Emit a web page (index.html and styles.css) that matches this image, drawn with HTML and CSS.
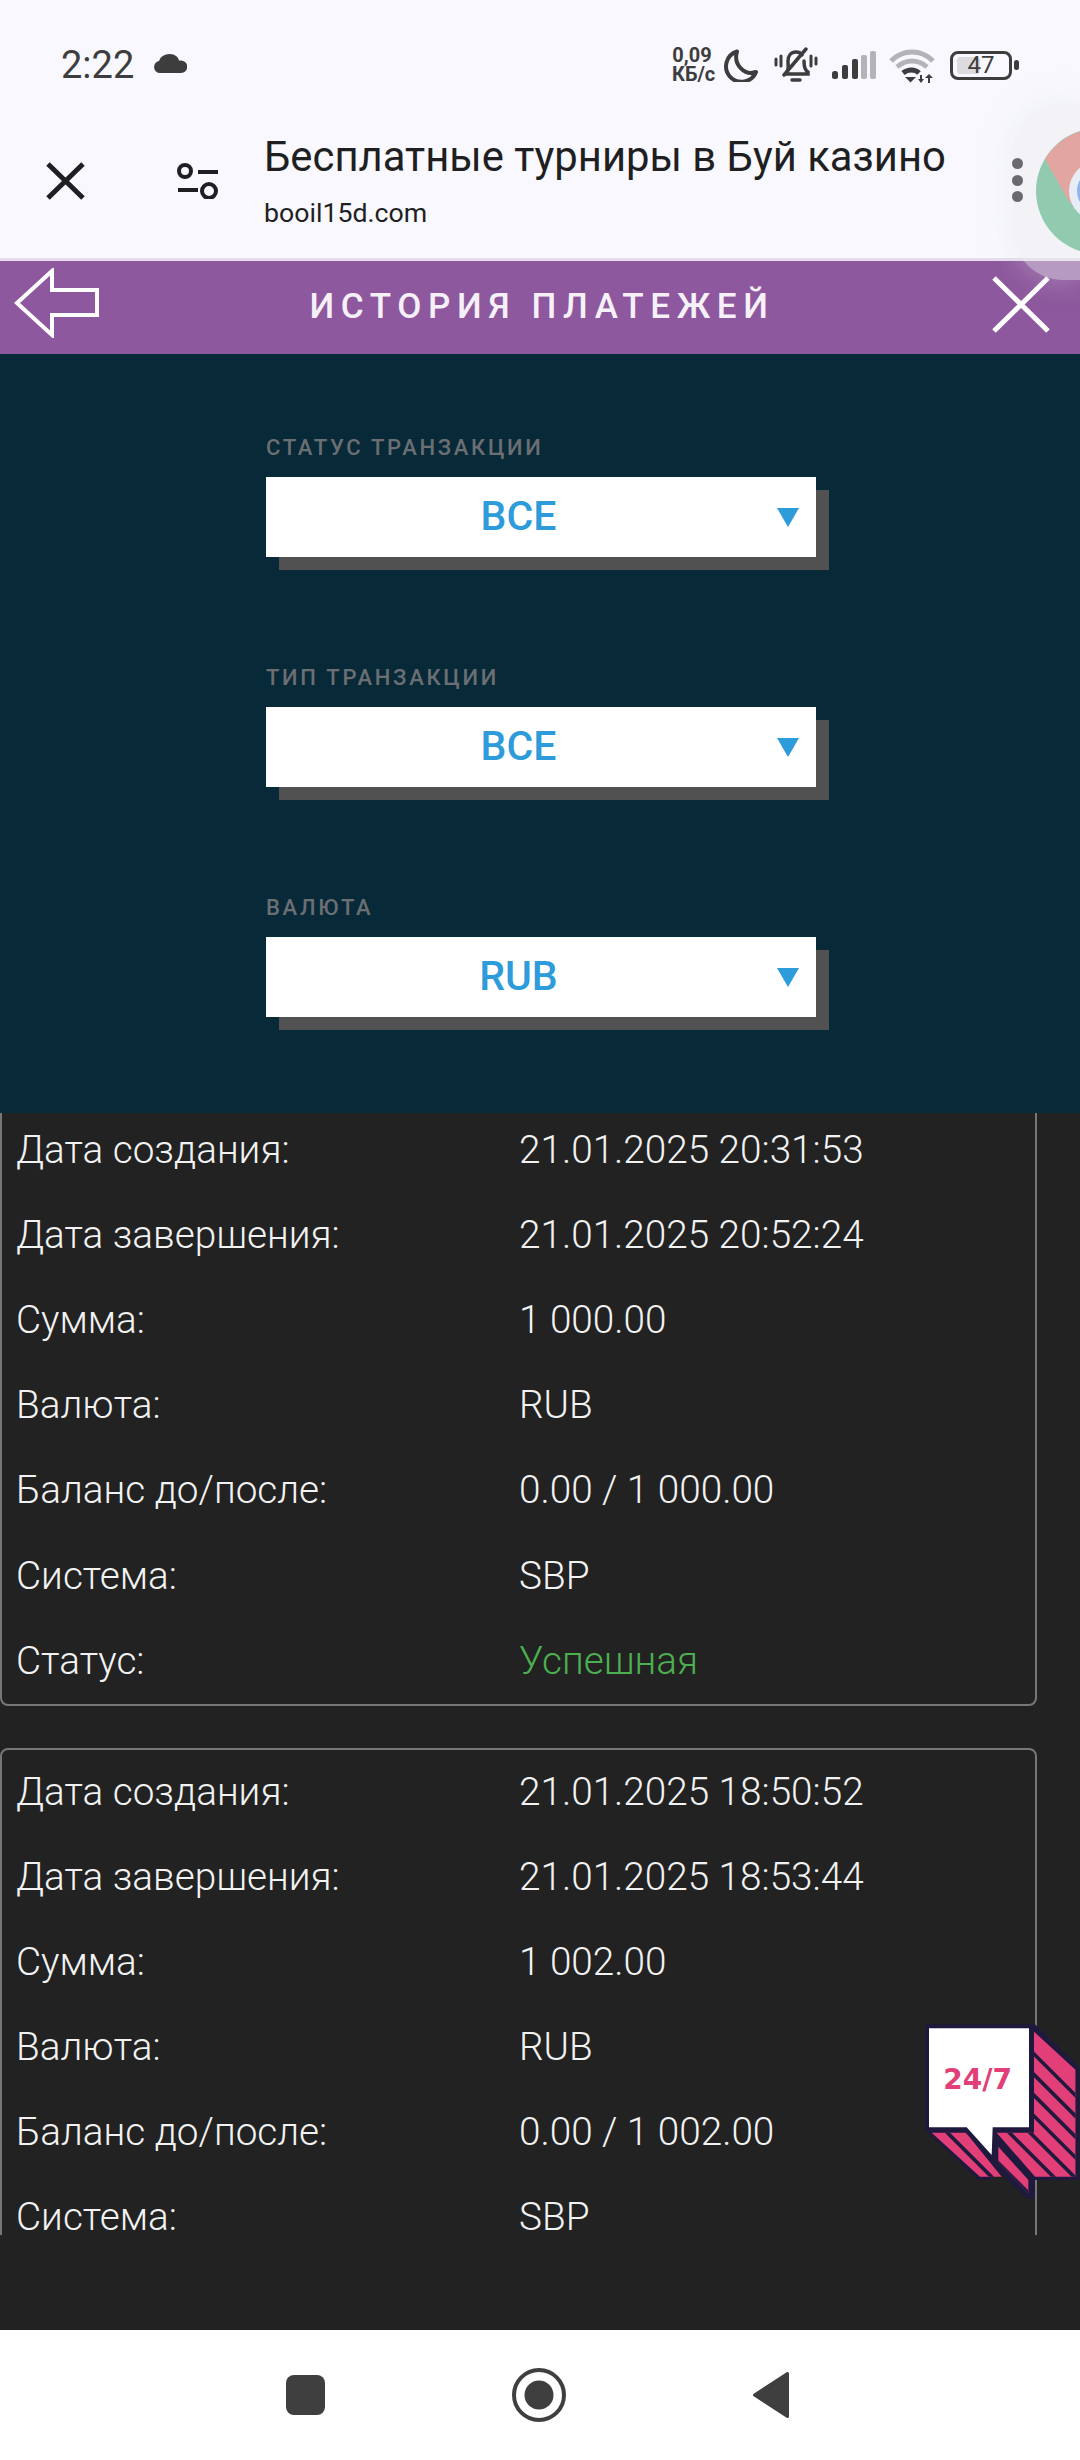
FILE: index.html
```html
<!DOCTYPE html>
<html lang="ru">
<head>
    <meta charset="UTF-8">
    <meta name="viewport" content="width=device-width, initial-scale=1.0">
    <title>История платежей</title>
    <link rel="stylesheet" href="styles.css">
</head>
<body>

    <!-- Phone status bar -->
    <div class="status-bar">
        <span class="clock">2:22</span>
        <svg class="cloud" width="33" height="19" viewBox="0 0 33 19"><path fill="#3d3d3d" d="M6 19a6 6 0 0 1-1-11.900A11 8 0 0 1 16 0a10 8 0 0 1 9 6.500h2a6.200 6.200 0 0 1 0 12.500z"/></svg>
        <div class="status-icons">
            <div class="net-speed"><span>0,09</span><span>КБ/с</span></div>
            <svg class="moon" width="35" height="33" viewBox="0 0 35 33"><path fill="none" stroke="#3d3d3d" stroke-width="4" stroke-linejoin="round" d="M14 2.500A15.500 15.500 0 1 0 33 23C22 27 10 16 14 2.500z"/></svg>
            <svg class="bell" width="44" height="36" viewBox="0 0 44 36">
                <g fill="none" stroke="#3d3d3d" stroke-linecap="round">
                    <path stroke-width="3" d="M2 12v6M37 9v10M42 11v6M7 9v10"/>
                    <path stroke-width="3.500" d="M13 25c2-3 1-7 1-11 0-5 3-9 8-9 3 0 5 1 6 3M30 14c0 4 0 9 4 11v2H12"/>
                    <path stroke-width="3.500" d="M32 2 10 28"/>
                    <path stroke-width="3.500" d="M18 33h8"/>
                </g>
            </svg>
            <svg class="signal" width="44" height="28" viewBox="0 0 44 28">
                <rect x="0" y="20" width="6" height="8" rx="2.500" fill="#3d3d3d"/>
                <rect x="10" y="14" width="6" height="14" rx="2" fill="#3d3d3d"/>
                <rect x="20" y="8" width="6" height="20" rx="2" fill="#3d3d3d"/>
                <rect x="29" y="4" width="6" height="24" rx="2" fill="#b4b4b8"/>
                <rect x="38" y="0" width="6" height="28" rx="2" fill="#b4b4b8"/>
            </svg>
            <svg class="wifi" width="46" height="35" viewBox="0 0 46 35">
                <g fill="none" stroke-width="5">
                    <path stroke="#b4b4b8" d="M2 13c12-12 30-12 42 0"/>
                    <path stroke="#b4b4b8" d="M8 19c9-8 21-8 30 0"/>
                    <path stroke="#3d3d3d" d="M14 25c5-4 12-4 16 0"/>
                </g>
                <path fill="#3d3d3d" d="M16 29h11l-5.500 5.500z"/>
                <path fill="#3d3d3d" d="M31 27h2v4h2l-3 4-3-4h2zM39 35h2v-5h3l-4-4-4 4h3z"/>
            </svg>
            <div class="battery">
                <div class="battery-body"><div class="battery-fill"></div><span>47</span></div>
                <div class="battery-nub"></div>
            </div>
        </div>
    </div>

    <!-- Custom tab toolbar -->
    <div class="toolbar">
        <svg class="tab-close" width="39" height="38" viewBox="0 0 39 38"><path fill="none" stroke="#1f1f22" stroke-width="5" d="M2 2l35 34M37 2 2 36"/></svg>
        <svg class="tab-tune" width="42" height="36" viewBox="0 0 42 36">
            <g fill="none" stroke="#1f1f22" stroke-width="4">
                <circle cx="8" cy="8" r="6"/>
                <circle cx="32" cy="28" r="7"/>
                <path d="M21 9h20M1 27h20"/>
            </g>
        </svg>
        <div class="tab-text">
            <div class="tab-title">Бесплатные турниры в Буй казино</div>
            <div class="tab-url">booil15d.com</div>
        </div>
    </div>

    <div class="page-header">
        <svg class="back-btn" width="85" height="70" viewBox="0 0 85 70"><path fill="none" stroke="#fff" stroke-width="4" d="M38 3 3 35l35 32V47h45V22H38z"/></svg>
        <div class="page-title">ИСТОРИЯ ПЛАТЕЖЕЙ</div>
        <svg class="close-btn" width="58" height="57" viewBox="0 0 58 57"><path fill="none" stroke="#fff" stroke-width="5" d="M2 2l54 53M56 2 2 55"/></svg>
    </div>

    <div class="filters">
        <div class="filter-group">
            <div class="filter-label">СТАТУС ТРАНЗАКЦИИ</div>
            <div class="filter-select"><span class="filter-value">ВСЕ</span><span class="filter-arrow"></span></div>
        </div>
        <div class="filter-group">
            <div class="filter-label">ТИП ТРАНЗАКЦИИ</div>
            <div class="filter-select"><span class="filter-value">ВСЕ</span><span class="filter-arrow"></span></div>
        </div>
        <div class="filter-group">
            <div class="filter-label">ВАЛЮТА</div>
            <div class="filter-select"><span class="filter-value">RUB</span><span class="filter-arrow"></span></div>
        </div>
    </div>

    <!-- Scrolled list of payments -->
    <div class="content">
        <div class="history">
            <div class="card">
                <div class="row"><span>Дата создания:</span><span>21.01.2025 20:31:53</span></div>
                <div class="row"><span>Дата завершения:</span><span>21.01.2025 20:52:24</span></div>
                <div class="row"><span>Сумма:</span><span>1 000.00</span></div>
                <div class="row"><span>Валюта:</span><span>RUB</span></div>
                <div class="row"><span>Баланс до/после:</span><span>0.00 / 1 000.00</span></div>
                <div class="row"><span>Система:</span><span>SBP</span></div>
                <div class="row"><span>Статус:</span><span class="success">Успешная</span></div>
            </div>
            <div class="card card-cut">
                <div class="row"><span>Дата создания:</span><span>21.01.2025 18:50:52</span></div>
                <div class="row"><span>Дата завершения:</span><span>21.01.2025 18:53:44</span></div>
                <div class="row"><span>Сумма:</span><span>1 002.00</span></div>
                <div class="row"><span>Валюта:</span><span>RUB</span></div>
                <div class="row"><span>Баланс до/после:</span><span>0.00 / 1 002.00</span></div>
                <div class="row"><span>Система:</span><span>SBP</span></div>
            </div>
        </div>
    </div>

    <div class="nav-bar">
        <div class="nav-square"></div>
        <svg width="54" height="54" viewBox="0 0 54 54"><circle cx="27" cy="27" r="25" fill="none" stroke="#3f3f3f" stroke-width="4"/><circle cx="27" cy="27" r="14.500" fill="#3f3f3f"/></svg>
        <svg width="36" height="46" viewBox="0 0 36 46"><path fill="#3f3f3f" stroke="#3f3f3f" stroke-width="3" stroke-linejoin="round" d="M34.500 1.500v43L1.500 23z"/></svg>
    </div>

    <!-- Floating chrome bubble -->
    <div class="bubble">
        <svg class="bubble-logo" width="67" height="177" viewBox="0 0 67 177">
            <circle cx="86" cy="88" r="63" fill="#92cab0"/>
            <path fill="#e3a5a0" d="M32 56A63 63 0 0 1 149 88H86L57 100z"/>
            <circle cx="86" cy="88" r="30" fill="#e8ecf6"/>
            <circle cx="86" cy="88" r="22" fill="#8fb4ee"/>
        </svg>
        <div class="bubble-dots"><span></span><span></span><span></span></div>
    </div>

    <!-- 24/7 support badge -->
    <svg class="support-badge" width="160" height="180" viewBox="120 120 480 540">
        <defs>
            <clipPath id="stripes">
                <path d="M462 155 587 270V590H465L350 458H462z"/>
                <path d="M155 458H258L365 590H300z"/>
                <path d="M355 500 445 600V640L355 545z"/>
            </clipPath>
        </defs>
        <path fill="#1f1a3d" d="M135 133H465L598 262V600H465V655H440L345 565 330 600H295L135 450z"/>
        <g clip-path="url(#stripes)">
            <rect x="120" y="120" width="480" height="540" fill="#e23f78"/>
            <path fill="none" stroke="#1f1a3d" stroke-width="11" d="M100 -140 700 460M100 -78 700 522M100 -16 700 584M100 46 700 646M100 108 700 708M100 170 700 770M100 232 700 832M100 294 700 894M100 356 700 956"/>
        </g>
        <path fill="#fff" d="M147 145H447V442H338L335 525 260 442H147z"/>
        <text class="badge-text" x="293" y="326" text-anchor="middle">24/7</text>
    </svg>

</body>
</html>
```

FILE: styles.css
```css
* {
    box-sizing: border-box;
}
html, body {
    margin: 0;
    padding: 0;
}
body {
    position: relative;
    width: 1080px;
    height: 2460px;
    overflow: hidden;
    display: flex;
    flex-direction: column;
    background-color: #222;
    font-family: Roboto, "Noto Sans", sans-serif;
}
svg {
    display: block;
    flex-shrink: 0;
}

/* status bar */
.status-bar {
    display: flex;
    align-items: center;
    height: 130px;
    padding: 0 61px 0 61px;
    background-color: #f8f8fe;
    color: #3d3d3d;
}
.clock {
    font-size: 38px;
    line-height: 38px;
}
.cloud {
    margin-left: 20px;
    margin-top: -3px;
}
.status-icons {
    display: flex;
    align-items: center;
    margin-left: auto;
}
.net-speed {
    display: flex;
    flex-direction: column;
    width: 40px;
    font-size: 20px;
    line-height: 19px;
    font-weight: 700;
    text-align: center;
    white-space: nowrap;
}
.moon {
    margin-left: 11px;
}
.bell {
    margin-left: 16px;
}
.signal {
    margin-left: 14px;
}
.wifi {
    margin-left: 13px;
}
.battery {
    display: flex;
    align-items: center;
    gap: 2px;
    margin-left: 15px;
}
.battery-body {
    position: relative;
    width: 62px;
    height: 29px;
    border: 3px solid #3d3d3d;
    border-radius: 8px;
    text-align: center;
    font-size: 24px;
    line-height: 23px;
}
.battery-body span {
    position: relative;
}
.battery-fill {
    position: absolute;
    left: 4px;
    top: 3px;
    bottom: 3px;
    width: 23px;
    border-radius: 3px;
    background-color: #dcdce0;
}
.battery-nub {
    width: 5px;
    height: 10px;
    border-radius: 3px;
    background-color: #3d3d3d;
}

/* custom tab toolbar */
.toolbar {
    display: flex;
    align-items: center;
    height: 131px;
    padding: 0 0 26px 46px;
    background-color: #f8f8fe;
    border-bottom: 3px solid #e6dcec;
    color: #1f1f22;
}
.tab-tune {
    margin-left: 92px;
}
.tab-text {
    margin-left: 45px;
}
.tab-title {
    font-size: 41.800px;
    line-height: 50px;
    white-space: nowrap;
}
.tab-url {
    font-size: 26.700px;
    line-height: 36px;
    margin-top: 13px;
}

/* purple header */
.page-header {
    display: grid;
    grid-template-columns: 1fr auto 1fr;
    align-items: center;
    height: 93px;
    padding: 0 30px;
    background-color: #8d589d;
}
.back-btn {
    margin: -10px 0 0 -16px;
}
.page-title {
    margin-left: 4px;
    padding-bottom: 2px;
    color: #f6f0f8;
    font-size: 35px;
    font-weight: 500;
    letter-spacing: 6.600px;
    white-space: nowrap;
}
.close-btn {
    justify-self: end;
    margin-top: -6px;
}

/* filters */
.filters {
    display: flex;
    flex-direction: column;
    gap: 108px;
    padding: 81px 0 96px 266px;
    background-color: #082938;
}
.filter-label {
    height: 26px;
    margin-bottom: 16px;
    color: #6b6f73;
    font-size: 22px;
    line-height: 26px;
    font-weight: 500;
    letter-spacing: 2.700px;
}
.filter-select {
    display: flex;
    align-items: center;
    width: 550px;
    height: 80px;
    padding-right: 17px;
    background-color: #fff;
    box-shadow: 13px 13px 0 #515151;
}
.filter-value {
    flex: 1;
    padding: 0 6px 2px 0;
    text-align: center;
    color: #2e9bdb;
    font-size: 41px;
    font-weight: 500;
}
.filter-arrow {
    width: 0;
    height: 0;
    border-left: 11px solid transparent;
    border-right: 11px solid transparent;
    border-top: 19px solid #2e9bdb;
}

/* payments */
.content {
    flex: 1;
}
.history {
    height: 1122px;
    overflow: hidden;
}
.card {
    width: 1037px;
    margin-bottom: 42px;
    border: 2px solid #777;
    border-radius: 8px;
    color: #f2f2f2;
    font-size: 38.700px;
    font-weight: 300;
}
.card:first-child {
    margin-top: -7px;
}
/* list is cut by the scroll area, no bottom edge visible */
.card-cut {
    height: 540px;
}
.row {
    display: grid;
    grid-template-columns: 503px 1fr;
    align-items: center;
    height: 85.100px;
    padding: 0 0 2px 14px;
    white-space: nowrap;
}
.success {
    color: #4caf50;
}

/* navigation bar */
.nav-bar {
    display: flex;
    align-items: center;
    gap: 187px;
    height: 130px;
    padding-left: 286px;
    background-color: #fff;
}
.nav-square {
    width: 39px;
    height: 40px;
    border-radius: 8px;
    background-color: #3f3f3f;
}

/* overlays */
.bubble {
    position: absolute;
    left: 1013px;
    top: 103px;
    width: 67px;
    height: 177px;
    border-radius: 50px 0 0 50px;
    background-color: rgba(235, 235, 240, 0.45);
    box-shadow: 0 0 30px rgba(220, 220, 230, 0.35);
}
.bubble-logo {
    position: absolute;
    left: 0;
    top: 0;
}
.bubble-dots {
    position: absolute;
    left: -1px;
    top: 55px;
    display: flex;
    flex-direction: column;
    gap: 5.500px;
}
.bubble-dots span {
    width: 11px;
    height: 11px;
    border-radius: 50%;
    background-color: #6a6a70;
}
.support-badge {
    position: absolute;
    left: 920px;
    top: 2020px;
}
.badge-text {
    fill: #e23f78;
    font-family: "DejaVu Sans", sans-serif;
    font-size: 84px;
    font-weight: 700;
}
```
